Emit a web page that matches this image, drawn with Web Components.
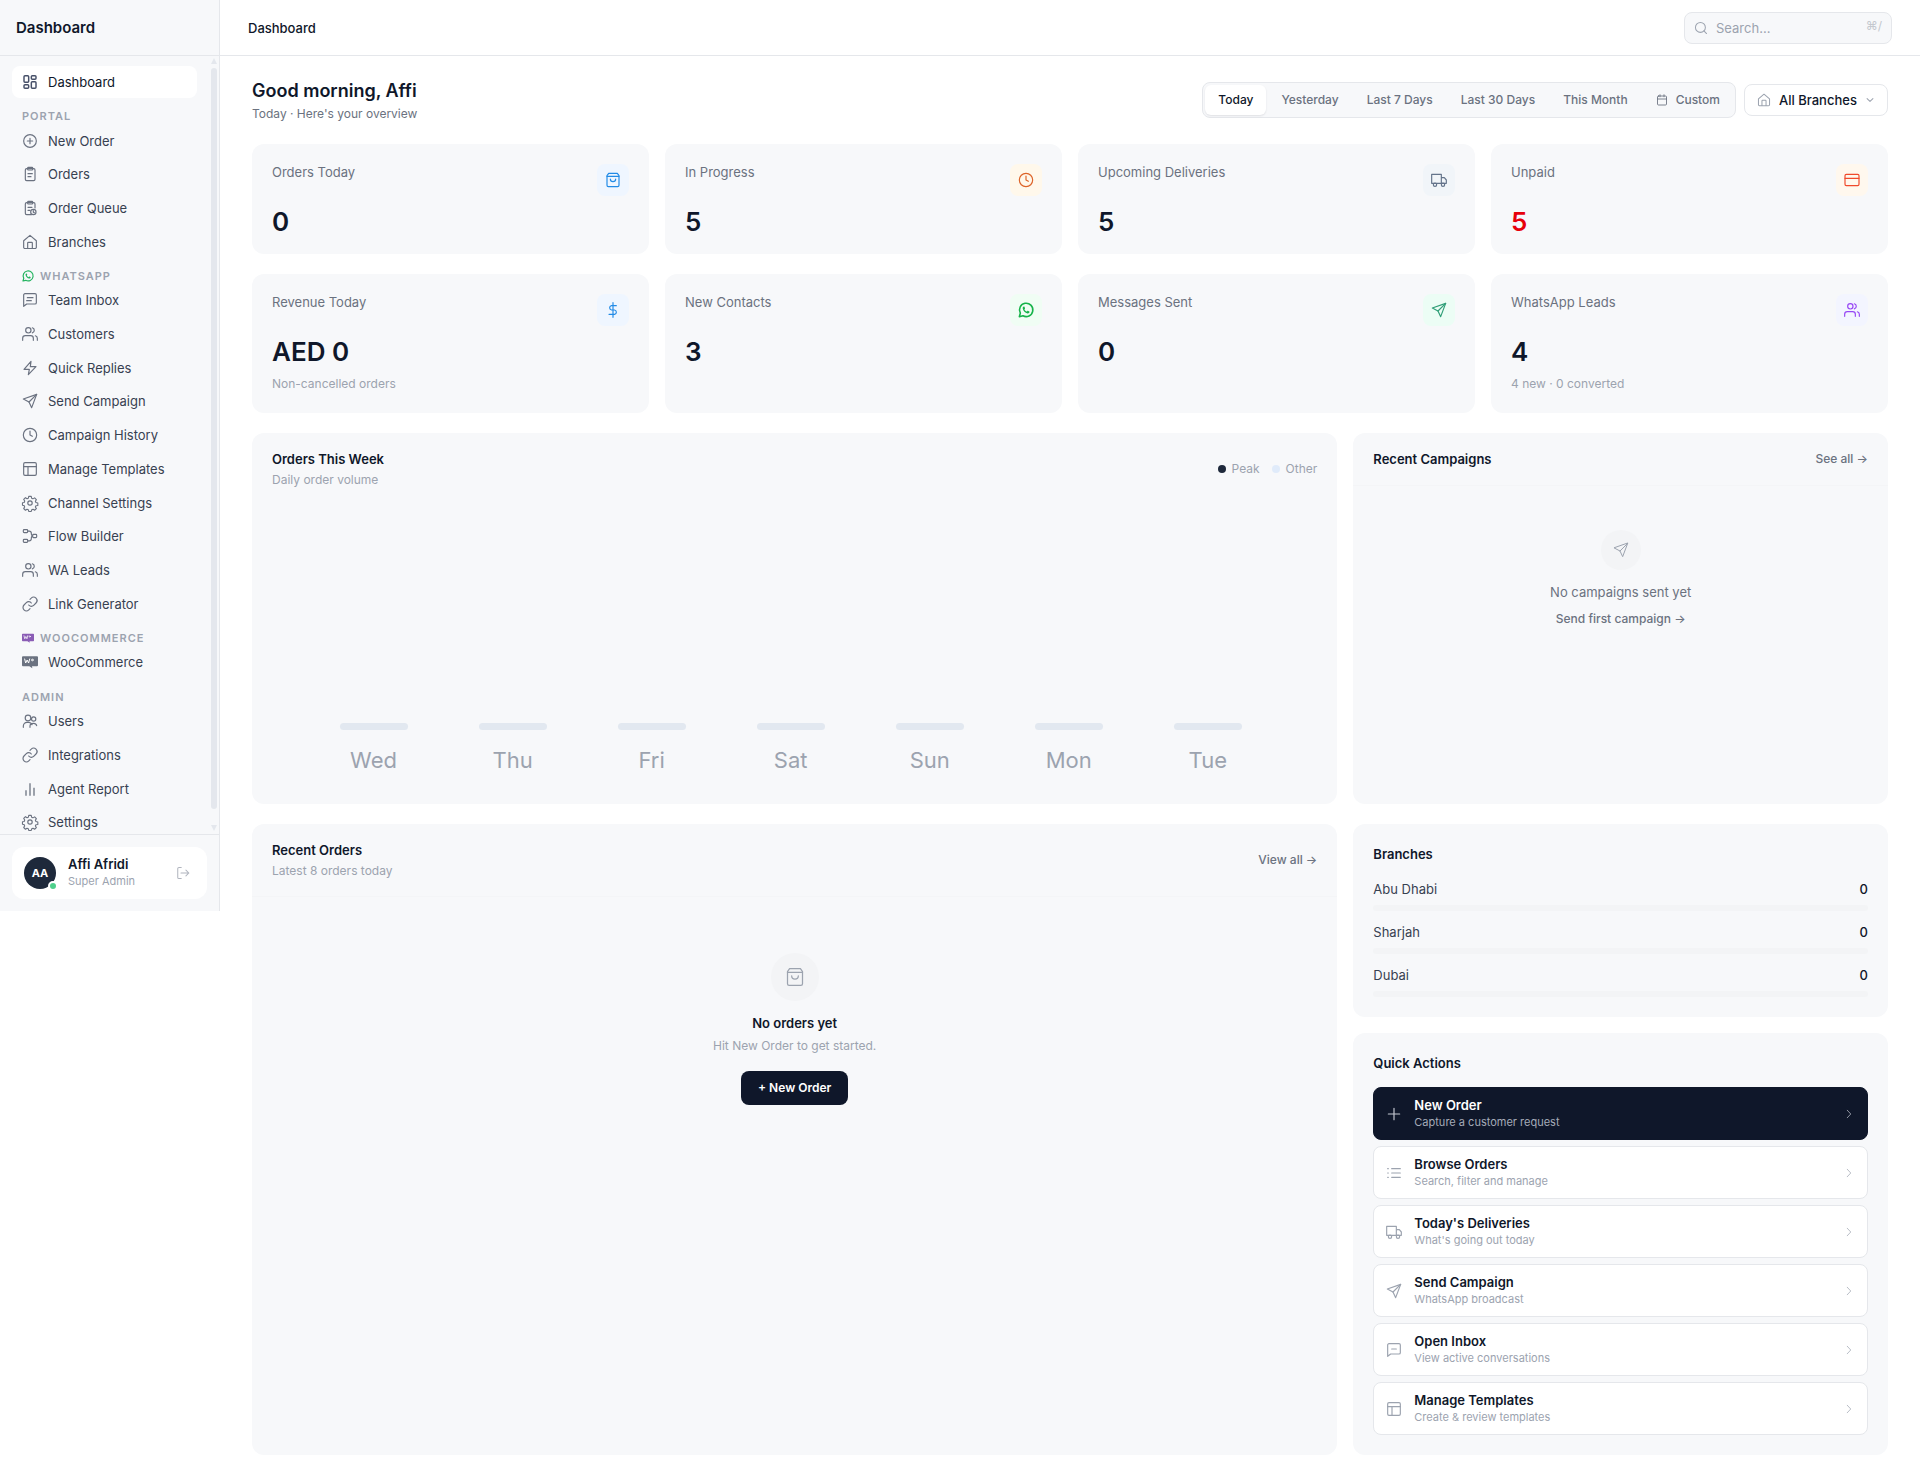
<!DOCTYPE html>
<html lang="en">
<head>
<meta charset="utf-8">
<meta name="viewport" content="width=device-width, initial-scale=1">
<title>Dashboard</title>
<style>
  :root {
    --ink: #0f172a;
    --text: #374151;
    --muted: #6b7280;
    --faint: #9ca3af;
    --line: #e5e7eb;
    --surface: #f7f8fa;
    --soft: #f3f4f6;
  }
  body {
    margin: 0;
    background: #fff;
    color: var(--ink);
    font-family: Inter, "Liberation Sans", sans-serif;
    font-size: 13px;
    line-height: 20px;
  }
</style>
</head>
<body>
<app-shell>
  <app-sidebar slot="sidebar" heading="Dashboard">
    <nav-item icon="dashboard" active>Dashboard</nav-item>
    <nav-label>Portal</nav-label>
    <nav-item icon="plus-circle">New Order</nav-item>
    <nav-item icon="clipboard">Orders</nav-item>
    <nav-item icon="queue">Order Queue</nav-item>
    <nav-item icon="home">Branches</nav-item>
    <nav-label icon="whatsapp" tint="#22b35e">WhatsApp</nav-label>
    <nav-item icon="message">Team Inbox</nav-item>
    <nav-item icon="users">Customers</nav-item>
    <nav-item icon="bolt">Quick Replies</nav-item>
    <nav-item icon="send">Send Campaign</nav-item>
    <nav-item icon="clock">Campaign History</nav-item>
    <nav-item icon="layout">Manage Templates</nav-item>
    <nav-item icon="gear">Channel Settings</nav-item>
    <nav-item icon="flow">Flow Builder</nav-item>
    <nav-item icon="users">WA Leads</nav-item>
    <nav-item icon="link">Link Generator</nav-item>
    <nav-label icon="woo" tint="#8a5cb5">WooCommerce</nav-label>
    <nav-item icon="woo">WooCommerce</nav-item>
    <nav-label>Admin</nav-label>
    <nav-item icon="team">Users</nav-item>
    <nav-item icon="link">Integrations</nav-item>
    <nav-item icon="bars">Agent Report</nav-item>
    <nav-item icon="gear">Settings</nav-item>
    <user-card slot="footer" initials="AA" name="Affi Afridi" role-name="Super Admin"></user-card>
  </app-sidebar>

  <top-bar slot="top" heading="Dashboard"></top-bar>

  <page-header heading="Good morning, Affi" sub="Today · Here's your overview">
    <date-filter></date-filter>
    <branch-select></branch-select>
  </page-header>

  <card-row cols="4">
    <stat-card label="Orders Today" value="0" icon="bag" fg="#228be6" bg="#eff6ff"></stat-card>
    <stat-card label="In Progress" value="5" icon="clock" fg="#dd6328" bg="#fff8eb"></stat-card>
    <stat-card label="Upcoming Deliveries" value="5" icon="truck" fg="#64748b" bg="#f1f5f9"></stat-card>
    <stat-card label="Unpaid" value="5" icon="card" fg="#f04a2c" bg="#fff8ee" alert></stat-card>
  </card-row>
  <card-row cols="4">
    <stat-card label="Revenue Today" value="AED 0" note="Non-cancelled orders" icon="dollar" fg="#228be6" bg="#eff6ff"></stat-card>
    <stat-card label="New Contacts" value="3" icon="whatsapp" fg="#16b34a" bg="#f0fdf4"></stat-card>
    <stat-card label="Messages Sent" value="0" icon="send" fg="#2f9e77" bg="#ecfdf5"></stat-card>
    <stat-card label="WhatsApp Leads" value="4" note="4 new · 0 converted" icon="users" fg="#9747f5" bg="#f3f5ff"></stat-card>
  </card-row>

  <card-row cols="3">
    <panel-card wide heading="Orders This Week" sub="Daily order volume" plain>
      <chart-legend slot="action"></chart-legend>
      <week-chart days="Wed Thu Fri Sat Sun Mon Tue"></week-chart>
    </panel-card>
    <panel-card heading="Recent Campaigns">
      <text-link slot="action">See all →</text-link>
      <empty-state icon="send" small heading="No campaigns sent yet">
        <text-link>Send first campaign →</text-link>
      </empty-state>
    </panel-card>
  </card-row>

  <card-row cols="3">
    <panel-card wide heading="Recent Orders" sub="Latest 8 orders today">
      <text-link slot="action">View all →</text-link>
      <empty-state icon="bag" heading="No orders yet" note="Hit New Order to get started.">
        <primary-button>+ New Order</primary-button>
      </empty-state>
    </panel-card>
    <side-stack>
      <list-card heading="Branches" spacing="11" lead="15">
        <branch-meter name="Abu Dhabi" count="0"></branch-meter>
        <branch-meter name="Sharjah" count="0"></branch-meter>
        <branch-meter name="Dubai" count="0"></branch-meter>
      </list-card>
      <list-card heading="Quick Actions" spacing="6" lead="14">
        <quick-action icon="plus" heading="New Order" note="Capture a customer request" primary></quick-action>
        <quick-action icon="list" heading="Browse Orders" note="Search, filter and manage"></quick-action>
        <quick-action icon="truck" heading="Today's Deliveries" note="What's going out today"></quick-action>
        <quick-action icon="send" heading="Send Campaign" note="WhatsApp broadcast"></quick-action>
        <quick-action icon="chat" heading="Open Inbox" note="View active conversations"></quick-action>
        <quick-action icon="layout" heading="Manage Templates" note="Create &amp; review templates"></quick-action>
      </list-card>
    </side-stack>
  </card-row>
</app-shell>

<script>
const ICONS = {
  dashboard: '<g stroke-width="2.2"><rect x="3" y="2.5" width="7" height="10" rx="1.5"/><rect x="14" y="2.5" width="7" height="5.5" rx="1.5"/><rect x="14" y="11.5" width="7" height="10" rx="1.5"/><rect x="3" y="16" width="7" height="5.5" rx="1.5"/></g>',
  'plus-circle': '<circle cx="12" cy="12" r="9.5"/><path d="M12 8v8M8 12h8"/>',
  clipboard: '<rect x="5" y="4" width="14.5" height="18" rx="2"/><rect x="8.5" y="2" width="7.5" height="4" rx="1"/><path d="M9 11.500h6.500M9 16h4.500"/>',
  queue: '<path d="M19.500 12V6a2 2 0 0 0-2-2H7a2 2 0 0 0-2 2v14a2 2 0 0 0 2 2h7"/><rect x="8.500" y="2" width="7.500" height="4" rx="1"/><path d="M9 11h6M9 15.500h3"/><circle cx="17" cy="18" r="4"/><path d="M17 16v2.200l1.500.8"/>',
  home: '<path d="M2.500 10.200 12 2l9.500 8.200V20a1.800 1.800 0 0 1-1.800 1.800H4.300A1.800 1.800 0 0 1 2.500 20z"/><path d="M8.500 21.500V13.500a1 1 0 0 1 1-1h5a1 1 0 0 1 1 1v8"/>',
  whatsapp: '<path stroke-width="2.400" d="m2 22 1.500-5.300A10 10 0 1 1 7.400 20.600z"/><path fill="currentColor" stroke="none" d="M8.800 6.800c-.9.100-2 1.300-1.700 3 .7 3.400 3.700 6.700 7.200 7.300 1.600.200 2.900-.8 3-2.100.1-.5-.2-.8-2.400-1.800-.8-.3-1.300 1.300-1.900 1.100-1.400-.5-2.700-1.700-3.300-3.100-.2-.6 1.100-1.200.8-2-.8-2.300-1-2.500-1.700-2.400z"/>',
  message: '<path d="M21.500 4.500v11.500a2 2 0 0 1-2 2H7l-4.500 3.500V4.500a2 2 0 0 1 2-2h15a2 2 0 0 1 2 2z"/><path d="M8 8.500h8.500M7 13h7"/>',
  chat: '<path d="M21.500 4.500v11.500a2 2 0 0 1-2 2H7l-4.500 3.500V4.500a2 2 0 0 1 2-2h15a2 2 0 0 1 2 2z"/><path d="M8.500 10.500h7"/>',
  users: '<path d="M17 21.500v-3a4 4 0 0 0-4-4H5a4 4 0 0 0-4 4v3"/><circle cx="9.500" cy="6.500" r="4"/><path d="M23 21.500v-3a4 4 0 0 0-3-3.800M15.500 2.700a4 4 0 0 1 0 7.700"/>',
  team: '<circle cx="9" cy="7.500" r="4.200"/><circle cx="17.500" cy="9" r="3.200"/><path d="M2 21.500v-2a5.500 5.500 0 0 1 5.500-5.500h2.500a5.500 5.500 0 0 1 5 3.500M12 21.500v-2c0-2.500 2.500-4 5.500-4 2.500 0 4 1.500 4.500 3.500"/>',
  bolt: '<path d="M13.500 2 3 14h8l-1.500 8L21 10h-8.500z"/>',
  send: '<path d="M22 2 14.500 22l-4-8.500L2 9z"/><path d="M22 2 10.500 13.500"/>',
  clock: '<circle cx="12" cy="12" r="10"/><path d="M12 6v6l3.500 2"/>',
  layout: '<rect x="2.500" y="2.500" width="19" height="19" rx="2"/><path d="M2.500 8.500h19M9 8.500v13"/>',
  gear: '<circle cx="12" cy="12" r="3.300"/><path d="M10 1.500h4l.7 3 2 .9 2.700-1.600 2.800 2.800-1.600 2.700.9 2 3 .7v4l-3 .3-.9 2.200 1.600 2.500-2.800 2.600-2.500-1.500-2.200.9-.7 2.500h-4l-.7-2.700-2-.8-2.500 1.600-2.800-2.800 1.500-2.600-.8-2-2.700-.600v-4l2.700-.5.9-2.200-1.600-2.600 2.800-2.800 2.600 1.600 2-.8z" stroke-linejoin="round" transform="translate(.7 .7) scale(.94)"/>',
  flow: '<rect x="2" y="2.500" width="6.500" height="4.500" rx="1.200"/><rect x="2" y="17" width="6.500" height="4.500" rx="1.200"/><rect x="16" y="9.500" width="6" height="5" rx="1.200"/><path d="M8.500 4.700h2.500a3 3 0 0 1 3 3v1.500a2.800 2.800 0 0 0 2 2.800M8.500 19.200h2.500a3 3 0 0 0 3-3v-1.500a2.800 2.800 0 0 1 2-2.700"/>',
  link: '<path d="M10 13.500a5 5 0 0 0 7.500.5l3.500-3.500a5 5 0 0 0-7.200-7.200L12 5"/><path d="M14 10.500a5 5 0 0 0-7.500-.5L3 13.500a5 5 0 0 0 7.200 7.200L12 19"/>',
  woo: '<path fill="currentColor" stroke="none" d="M1.500 3.500h21A1.500 1.500 0 0 1 24 5v12a1.500 1.500 0 0 1-1.500 1.500H15l.5 3-4.500-3H1.500A1.500 1.500 0 0 1 0 17V5a1.500 1.500 0 0 1 1.500-1.500z"/><path stroke="#fff" stroke-width="1.500" d="m4 7.500 1.500 6 2.200-4.500 2.200 4.500 1.600-6"/><circle stroke="#fff" stroke-width="1.300" cx="15.500" cy="9" r="1.300"/>',
  bars: '<path stroke-width="2.600" d="M6 14v8M12 3.500V22M18 10v12" stroke-linecap="butt" opacity=".75"/>',
  bag: '<path d="M5.500 2h13L21 5.500V20a2 2 0 0 1-2 2H5a2 2 0 0 1-2-2V5.500z"/><path d="M3 6.500h18M16 10.500a4 4 0 0 1-8 0"/>',
  truck: '<path d="M1 3.500h14.500V17H1zM15.500 8.500H20l3 3.500v5h-7.500z"/><circle cx="6" cy="19" r="2.500"/><circle cx="18" cy="19" r="2.500"/>',
  card: '<rect x="1.500" y="3.500" width="21" height="17" rx="2"/><path d="M1.500 9.500h21"/>',
  dollar: '<path d="M12 1v22M17 5.500H9.700a3.300 3.300 0 0 0 0 6.500h4.600a3.300 3.300 0 0 1 0 6.500H6"/>',
  search: '<circle cx="11" cy="11" r="8.500"/><path d="m21.500 21.500-4.500-4.500"/>',
  calendar: '<rect x="3" y="4" width="18" height="18" rx="2"/><path d="M3 10h18M8 1.500v4M16 1.500v4"/>',
  down: '<path d="m5 8.500 7 7 7-7"/>',
  right: '<path d="m8.500 4.500 7 7.500-7 7.500"/>',
  plus: '<path d="M12 3.500v17M3.500 12h17"/>',
  list: '<path d="M8.500 5.500h13M8.500 12h13M8.500 18.500h13M2.500 5.500h1M2.500 12h1M2.500 18.500h1"/>',
  logout: '<path d="M9 21.500H5a2 2 0 0 1-2-2v-15a2 2 0 0 1 2-2h4M8.500 12H22M17 7l5 5-5 5"/>'
};

const esc = s => (s || '').replace(/&/g, '&amp;').replace(/</g, '&lt;');

/* Registers an element whose shadow markup is built from its attributes. */
function define(name, render) {
  customElements.define(name, class extends HTMLElement {
    connectedCallback() {
      if (this.shadowRoot) return;
      const root = this.attachShadow({ mode: 'open' });
      const tpl = document.createElement('template');
      tpl.innerHTML = '<style>*{box-sizing:border-box}button,input,select{font:inherit;color:inherit;margin:0}a{color:inherit;text-decoration:none}h1,h2,h3,p{margin:0;font:inherit}</style>' + render(this, k => esc(this.getAttribute(k)));
      root.append(tpl.content.cloneNode(true));
    }
  });
}

define('ui-icon', (el) => {
  const size = el.getAttribute('size') || 16;
  return `<style>:host{display:block;flex:none;width:${size}px;height:${size}px}svg{display:block;overflow:visible}</style>
  <svg width="${size}" height="${size}" viewBox="0 0 24 24" fill="none" stroke="currentColor" stroke-width="${el.getAttribute('weight') || 1.75}" stroke-linecap="round" stroke-linejoin="round" aria-hidden="true">${ICONS[el.getAttribute('name')]}</svg>`;
});

define('app-shell', () => `<style>
  :host{display:flex;align-items:flex-start}
  .body{flex:1;min-width:0}
  main{display:flex;flex-direction:column;gap:20px;padding:24px 32px 20px}
  </style>
  <slot name="sidebar"></slot>
  <div class="body"><slot name="top"></slot><main><slot></slot></main></div>`);

define('app-sidebar', (el, a) => `<style>
  :host{display:flex;flex-direction:column;flex:none;width:220px;height:911px;box-sizing:border-box;background:var(--surface);border-right:1px solid var(--line)}
  header{display:flex;align-items:center;height:56px;flex:none;padding:0 16px;border-bottom:1px solid var(--line);font-size:15px;font-weight:600}
  .scroll{display:flex;flex:1;min-height:0;overflow:hidden}
  nav{display:flex;flex-direction:column;flex:1;height:calc(100% + 6px);padding:10px 14px 0 12px}
  ::slotted(nav-item){flex:1 1 0}
  .track{display:flex;flex-direction:column;width:6px;margin:2px 2px 3px 0;align-items:center}
  .thumb{flex:1;width:6px;border-radius:3px;background:#e4e7ed;margin:4px 0 16px}
  .up,.dn{border:3px solid transparent;border-top-width:0;border-bottom:6px solid #e4e7ed}
  .dn{border-bottom:0;border-top:6px solid #e4e7ed}
  footer{flex:none;padding:12px;border-top:1px solid var(--line)}
  </style>
  <header>${a('heading')}</header>
  <div class="scroll"><nav aria-label="Main"><slot></slot></nav>
  <div class="track" aria-hidden="true"><i class="up"></i><i class="thumb"></i><i class="dn"></i></div></div>
  <footer><slot name="footer"></slot></footer>`);

define('nav-item', (el, a) => `<style>
  :host{display:block;min-height:0;padding-bottom:2px;box-sizing:border-box}
  a{display:flex;align-items:center;gap:10px;height:100%;padding:0 10px;border-radius:8px;font-size:13px;color:var(--text)}
  ui-icon{color:var(--muted)}
  :host([active]) a{background:#fff;color:var(--ink)}
  :host([active]) ui-icon{color:#475069}
  </style><a href="#"><ui-icon name="${a('icon')}"></ui-icon><slot></slot></a>`);

define('nav-label', (el, a) => `<style>
  :host{display:flex;flex:none;align-items:center;gap:6px;height:25px;padding:8px 10px 0;box-sizing:border-box;font-size:11px;line-height:16px;font-weight:600;letter-spacing:1px;text-transform:uppercase;color:var(--faint)}
  ui-icon{color:${a('tint') || 'inherit'}}
  </style>${el.hasAttribute('icon') ? `<ui-icon name="${a('icon')}" size="12"></ui-icon>` : ''}<slot></slot>`);

define('user-card', (el, a) => `<style>
  :host{display:flex;align-items:center;gap:12px;height:52px;padding:0 12px;box-sizing:border-box;background:#fff;border-radius:12px}
  .avatar{position:relative;display:grid;place-items:center;width:32px;height:32px;border-radius:50%;background:#1e293b;color:#fff;font-size:11px;font-weight:700}
  .avatar i{position:absolute;right:-2px;bottom:-2px;width:6px;height:6px;border:2px solid #fff;border-radius:50%;background:#4fd08c;box-sizing:content-box}
  .who{flex:1;line-height:17px;font-weight:600}
  .who span{display:block;font-size:11px;font-weight:400;color:var(--faint)}
  button{padding:5px;border:0;background:none;color:#b0b4be}
  </style><div class="avatar">${a('initials')}<i></i></div>
  <div class="who">${a('name')}<span>${a('role-name')}</span></div>
  <button type="button" aria-label="Log out"><ui-icon name="logout" size="14"></ui-icon></button>`);

define('top-bar', (el, a) => `<style>
  :host{display:flex;align-items:center;justify-content:space-between;height:56px;padding:0 28px;box-sizing:border-box;border-bottom:1px solid var(--line)}
  h1{font-size:13px;font-weight:500}
  label{display:flex;align-items:center;gap:8px;width:208px;height:32px;padding:0 9px;background:var(--surface);border:1px solid var(--line);border-radius:8px;color:var(--faint)}
  input{flex:1;min-width:0;padding:0;border:0;outline:0;background:none}
  input::placeholder{color:var(--faint);opacity:1}
  kbd{font:12px/16px Inter,"DejaVu Sans",sans-serif;color:#c4c8cf;padding-bottom:4px}
  </style><h1>${a('heading')}</h1>
  <label><ui-icon name="search" size="14"></ui-icon><input type="text" placeholder="Search..." aria-label="Search"><kbd>⌘/</kbd></label>`);

define('page-header', (el, a) => `<style>
  :host{display:flex;justify-content:space-between;align-items:flex-start}
  h2{font-size:18px;line-height:22px;font-weight:600}
  p{margin-top:2px;font-size:12px;color:var(--muted)}
  .tools{display:flex;align-items:center;gap:8px;padding-top:2px}
  </style><div><h2>${a('heading')}</h2><p>${a('sub')}</p></div><div class="tools"><slot></slot></div>`);

define('date-filter', () => `<style>
  :host{display:flex;gap:2px;padding:2px;background:var(--surface);border:1px solid var(--line);border-radius:8px}
  button{display:flex;align-items:center;gap:8px;height:30px;padding:0 13px;border:0;border-radius:6px;background:none;font-size:12px;font-weight:500;color:var(--muted)}
  .on{background:#fff;color:var(--ink);box-shadow:0 1px 2px rgb(15 23 42 / .1)}
  </style><button type="button" class="on">Today</button><button type="button">Yesterday</button><button type="button">Last 7 Days</button><button type="button">Last 30 Days</button><button type="button">This Month</button><button type="button"><ui-icon name="calendar" size="12"></ui-icon>Custom</button>`);

define('branch-select', () => `<style>
  :host{display:block}
  label{display:flex;align-items:center;gap:8px;height:32px;padding:0 12px;border:1px solid var(--line);border-radius:8px;background:#fff;color:var(--faint)}
  select{appearance:none;padding:0;border:0;outline:0;background:none;font-size:13px;font-weight:500;color:var(--ink)}
  </style><label><ui-icon name="home" size="14"></ui-icon><select aria-label="Branch"><option>All Branches</option></select><ui-icon name="down" size="10" weight="2.500"></ui-icon></label>`);

define('card-row', (el, a) => `<style>
  :host{display:grid;grid-template-columns:repeat(${a('cols')},minmax(0,1fr));gap:16px}
  ::slotted([wide]){grid-column:span 2}
  </style><slot></slot>`);

define('stat-card', (el, a) => `<style>
  :host{display:block;padding:20px;box-sizing:border-box;background:var(--surface);border-radius:12px}
  .top{display:flex;justify-content:space-between;height:32px;line-height:16px;color:var(--muted)}
  .tile{display:grid;place-items:center;width:32px;height:32px;border-radius:8px;background:${a('bg')};color:${a('fg')}}
  .value{margin-top:14px;font-size:26px;line-height:24px;font-weight:600}
  :host([alert]) .value{color:#e7000b}
  .note{margin-top:11px;font-size:12px;line-height:18px;color:var(--faint)}
  </style><div class="top">${a('label')}<span class="tile"><ui-icon name="${a('icon')}"></ui-icon></span></div>
  <div class="value">${a('value')}</div>${el.hasAttribute('note') ? `<div class="note">${a('note')}</div>` : ''}`);

define('panel-card', (el, a) => `<style>
  :host{display:flex;flex-direction:column;background:var(--surface);border-radius:12px}
  header{display:flex;align-items:center;justify-content:space-between;padding:16px 20px;border-bottom:1px solid #f4f5f7}
  :host([plain]) header{border-color:transparent}
  h3{font-weight:600}
  p{margin-top:2px;font-size:12px;line-height:18px;color:var(--faint)}
  </style><header><div><h3>${a('heading')}</h3>${el.hasAttribute('sub') ? `<p>${a('sub')}</p>` : ''}</div><slot name="action"></slot></header><slot></slot>`);

define('text-link', () => `<style>:host{display:block;font-size:12px;font-weight:500;color:var(--muted)}</style><a href="#"><slot></slot></a>`);

define('chart-legend', () => `<style>
  :host{display:flex;gap:12px;font-size:12px;color:var(--faint)}
  span{display:flex;align-items:center;gap:6px}
  i{width:8px;height:8px;border-radius:50%;background:#1e293b}
  .o{background:#e0ebfa}
  </style><span><i></i>Peak</span><span><i class="o"></i>Other</span>`);

define('week-chart', (el, a) => `<style>
  :host{display:flex;align-items:flex-end;height:298px;padding:0 60px 28px 52px;box-sizing:border-box}
  div{display:flex;flex-direction:column;align-items:center;flex:1;gap:14px;font-size:22px;line-height:32px;color:var(--faint)}
  i{width:68px;height:7px;border-radius:4px;background:#e2e8f0}
  </style>${a('days').split(' ').map(d => `<div><i></i>${d}</div>`).join('')}`);

define('empty-state', (el, a) => `<style>
  :host{display:flex;flex-direction:column;align-items:center;padding-top:56px;text-align:center}
  .disc{display:grid;place-items:center;width:48px;height:48px;margin-bottom:12px;border-radius:50%;background:var(--soft);color:var(--faint)}
  h3{font-weight:600}
  p{margin-top:4px;font-size:12px;line-height:18px;color:var(--faint)}
  ::slotted(*){margin-top:16px}
  :host([small]){padding-top:44px}
  :host([small]) .disc{width:40px;height:40px}
  :host([small]) h3{font-weight:400;color:var(--muted)}
  :host([small]) ::slotted(*){margin-top:7px}
  </style><div class="disc"><ui-icon name="${a('icon')}" size="${el.hasAttribute('small') ? 16 : 20}" weight="1.500"></ui-icon></div><h3>${a('heading')}</h3>${el.hasAttribute('note') ? `<p>${a('note')}</p>` : ''}<slot></slot>`);

define('primary-button', () => `<style>
  :host{display:block}
  button{height:34px;padding:0 17px;border:0;border-radius:8px;background:var(--ink);color:#fff;font-size:12px;font-weight:600}
  </style><button type="button"><slot></slot></button>`);

define('side-stack', () => `<style>:host{display:flex;flex-direction:column;gap:16px}</style><slot></slot>`);

define('list-card', (el, a) => `<style>
  :host{display:block;padding:20px;background:var(--surface);border-radius:12px}
  h3{margin-bottom:${a('lead')}px;font-weight:600}
  div{display:flex;flex-direction:column;gap:${a('spacing')}px}
  </style><h3>${a('heading')}</h3><div><slot></slot></div>`);

define('branch-meter', (el, a) => `<style>
  :host{display:block;color:var(--text)}
  div{display:flex;justify-content:space-between}
  b{font-weight:500;color:var(--ink)}
  i{display:block;height:6px;margin-top:6px;border-radius:3px;background:var(--soft)}
  </style><div><span>${a('name')}</span><b>${a('count')}</b></div><i></i>`);

define('quick-action', (el, a) => `<style>
  :host{display:block}
  button{display:flex;align-items:center;gap:12px;width:100%;height:53px;padding:0 12px;text-align:left;background:#fff;border:1px solid var(--line);border-radius:8px;color:var(--faint)}
  .t{flex:1;font-weight:600;line-height:18px;color:var(--ink)}
  small{display:block;font-size:11px;font-weight:400;line-height:17px;color:var(--faint)}
  .go{opacity:.7}
  :host([primary]) button{background:var(--ink);border-color:var(--ink);color:#c5c9d2}
  :host([primary]) .t{color:#fff}
  :host([primary]) small{color:#a5abb8}
  </style><button type="button"><ui-icon name="${a('icon')}"></ui-icon><span class="t">${a('heading')}<small>${a('note')}</small></span><ui-icon class="go" name="right" size="12" weight="2"></ui-icon></button>`);
</script>
</body>
</html>
